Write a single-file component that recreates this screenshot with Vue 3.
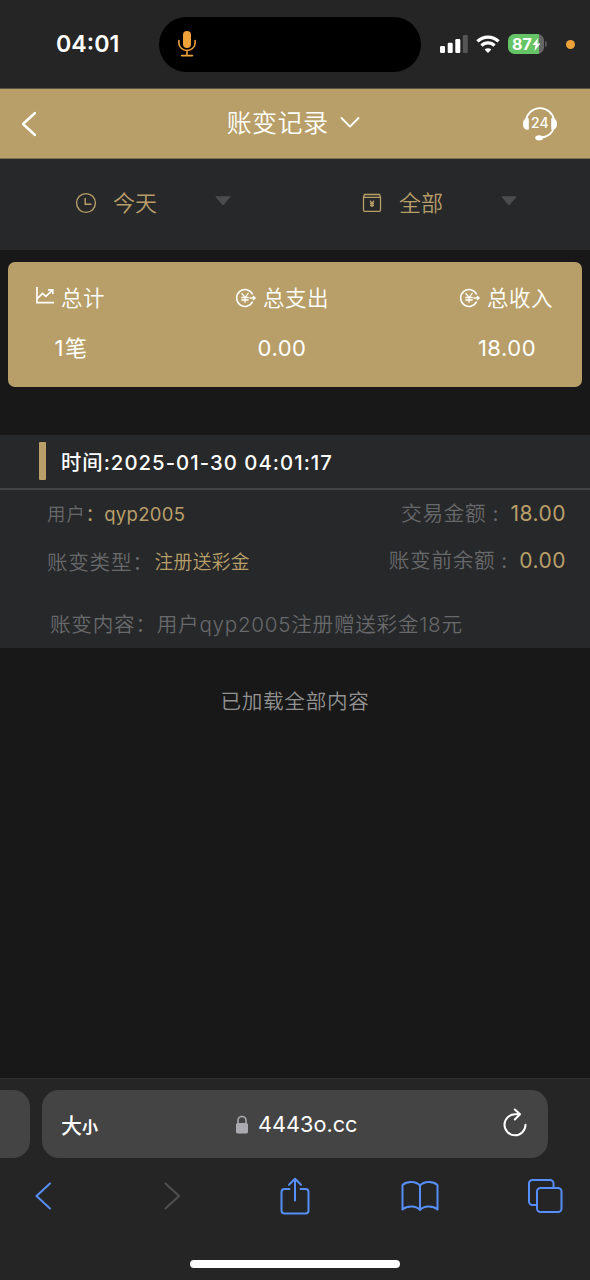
<script setup>
const totals = [
  { key: 'count', label: '总计', value: '1笔', icon: 'chart' },
  { key: 'out', label: '总支出', value: '0.00', icon: 'coin' },
  { key: 'in', label: '总收入', value: '18.00', icon: 'coin' },
]
const filters = [
  { key: 'day', label: '今天', icon: 'clock' },
  { key: 'type', label: '全部', icon: 'box' },
]
</script>

<template>
  <div class="screen">
    <div class="status">
      <span class="time">04:01</span>
      <div class="island">
        <svg width="20" height="28" viewBox="0 0 20 28" fill="none" stroke="#f0a23a" stroke-width="1.6" stroke-linecap="round">
          <rect x="6" y="1" width="8" height="17" rx="4" fill="#f0a23a" stroke="none" />
          <path d="M1.9 10.5v2.4a8.1 7.6 0 0 0 16.2 0v-2.4M10 20.8v4.6M4.6 25.6h10.8" />
        </svg>
      </div>
      <svg class="signal" width="28" height="18" viewBox="0 0 28 18" fill="#fff">
        <rect x="0" y="11" width="5" height="7" rx="1.2" />
        <rect x="7.7" y="7.7" width="5" height="10.3" rx="1.2" />
        <rect x="15.3" y="4" width="5" height="14" rx="1.2" />
        <rect x="22.8" y="0" width="5" height="18" rx="1.2" fill="#555" />
      </svg>
      <svg class="wifi" width="24" height="18" viewBox="0 0 24 18" fill="none" stroke="#fff" stroke-width="3.3">
        <path d="M1.4 6.4a15.2 15.2 0 0 1 21.2 0" />
        <path d="M5.5 10.6a9.3 9.3 0 0 1 13 0" />
        <path d="M12 17.9L8.6 14.5a4.9 4.9 0 0 1 6.8 0z" fill="#fff" stroke="none" />
      </svg>
      <div class="battery">
        <span>87</span>
        <svg width="9" height="13" viewBox="0 0 9 13"><path d="M6.2 0L.4 7.1h3.1L2.5 13l6-7.5H5.3z" fill="#fff" /></svg>
      </div>
      <i class="nub"></i>
      <i class="dot"></i>
    </div>

    <header class="nav">
      <svg class="back" width="16" height="26" viewBox="0 0 16 26" fill="none" stroke="#fff" stroke-width="2.4" stroke-linecap="round" stroke-linejoin="round"><path d="M14 2L2 13l12 11" /></svg>
      <div class="title">
        <span>账变记录</span>
        <svg width="20" height="13" viewBox="0 0 20 13" fill="none" stroke="#fff" stroke-width="1.9" stroke-linecap="round" stroke-linejoin="round"><path d="M1.5 2L10 10.6 18.5 2" /></svg>
      </div>
      <svg class="service" width="36" height="34" viewBox="0 0 36 34" fill="none">
        <path d="M4 13A14.2 14.2 0 0 1 32 13M32 20C30.5 26.5 26 30.2 18 30.7" stroke="#fff" stroke-width="1.8" />
        <path d="M6.8 11.5v11C3 23.5 1 20.8 1 17s2-6.5 5.800-5.500zM29.200 11.500v11c3.800 1 5.800-1.700 5.800-5.500s-2-6.500-5.800-5.500z" fill="#fff" />
        <ellipse cx="17.200" cy="30.800" rx="4" ry="2.600" fill="#fff" />
        <text x="17.800" y="21.300" text-anchor="middle" class="svc-text">24</text>
      </svg>
    </header>

    <div class="filters">
      <div v-for="f in filters" :key="f.key" class="filter" :class="f.key">
        <svg v-if="f.icon === 'clock'" width="22" height="22" viewBox="0 0 22 22" fill="none" stroke="#b89f69" stroke-width="1.400"><circle cx="11" cy="11" r="9.400" /><path d="M10.200 6v6.300h6.300" /></svg>
        <svg v-else width="22" height="22" viewBox="0 0 22 22" fill="none" stroke="#b89f69" stroke-width="1.300"><path d="M3.500 2.500h15l1 2.500v13.300a1 1 0 0 1-1 1h-15a1 1 0 0 1-1-1V5zM2.500 5.300h17" /><path d="M9 8.800l2 2.300 2-2.300M11 11v4M9 11.500h4M9 13.500h4" /></svg>
        <span>{{ f.label }}</span>
        <svg class="caret" width="16" height="10" viewBox="0 0 16 10"><path d="M.8.300h14.400q.600 0 .200.600L8.700 8.800q-.7.700-1.400 0L.6.900Q.2.300.8.300z" fill="#4b4c4e" /></svg>
      </div>
    </div>

    <main>
      <section class="totals">
        <div v-for="t in totals" :key="t.key" class="total" :class="t.key">
          <div class="total-label">
            <svg v-if="t.icon === 'chart'" width="20" height="20" viewBox="0 0 20 20" fill="none" stroke="#fff" stroke-width="1.700"><path d="M2 1v15.600h17M2 13l5.500-5.600 3.300 3 6.500-6M13 3.800h4.800v4.500" /></svg>
            <svg v-else width="22" height="20" viewBox="0 0 22 20" fill="none" stroke="#fff" stroke-width="1.500"><path d="M17.600 6.300A8.400 8.400 0 1 0 17.600 13.700" /><path d="M6.500 5.200l3.500 4.100 3.500-4.100M10 9.300v5.500M6.300 9.500h7.400M6.300 12h7.400M14.500 10h5.500M18 8l2.200 2-2.200 2" stroke-width="1.300" /></svg>
            <span>{{ t.label }}</span>
          </div>
          <div class="total-value">{{ t.value }}</div>
        </div>
      </section>

      <article class="record">
        <div class="record-head"><i></i><span>时间:2025-01-30 04:01:17</span></div>
        <div class="line user">
          <div><span class="small">用户</span><b>：qyp2005</b></div>
          <div class="amount"><span>交易金额</span><em>:</em><b>18.00</b></div>
        </div>
        <div class="line kind">
          <div><span>账变类型：</span><b>注册送彩金</b></div>
          <div class="amount"><span>账变前余额</span><em>:</em><b>0.00</b></div>
        </div>
        <p class="content">账变内容：用户qyp2005注册赠送彩金18元</p>
      </article>
      <p class="end">已加载全部内容</p>
    </main>

    <footer class="browser">
      <div class="tabs">
        <div class="prev-tab"></div>
        <div class="address">
          <span class="size">大<small>小</small></span>
          <div class="host">
            <svg width="14" height="19" viewBox="0 0 14 19"><path d="M3 9V5.500a4 4 0 0 1 8 0V9" fill="none" stroke="#aaaaaf" stroke-width="1.600" /><rect x="1" y="8" width="12" height="10.500" rx="1.800" fill="#aaaaaf" /></svg>
            <span>4443o.cc</span>
          </div>
          <svg class="reload" width="26" height="30" viewBox="0 0 26 30" fill="none" stroke="#fff" stroke-width="2" stroke-linecap="round" stroke-linejoin="round"><path d="M23.500 16.800A10.500 10.500 0 1 1 13 6.300h4.500M12.800 1.500l5.200 4.800-5.200 5.200" /></svg>
        </div>
      </div>
      <div class="tools">
        <svg width="18" height="30" viewBox="0 0 18 30" class="blue"><path d="M16 2.500L2.500 15 16 27.500" /></svg>
        <svg width="18" height="30" viewBox="0 0 18 30" class="gray forward"><path d="M2.500 2.500L16 15 2.500 27.500" /></svg>
        <svg width="30" height="38" viewBox="0 0 30 38" class="blue share"><path d="M9.500 12H4.500a3 3 0 0 0-3 3v18.500a3 3 0 0 0 3 3h21a3 3 0 0 0 3-3V15a3 3 0 0 0-3-3h-5M15 23.500V2M9 7.800L15 1.800l6 6" /></svg>
        <svg width="38" height="32" viewBox="0 0 38 32" class="blue book"><path d="M19 5.500C15 1 6 .7 1.500 5v24.500C6 25.500 15 25.500 19 30c4-4.500 13-4.500 17.500-.500V5C32 .700 23 1 19 5.500zM19 5.500V30" /></svg>
        <svg width="36" height="36" viewBox="0 0 36 36" class="blue windows"><rect x="10" y="10" width="24.500" height="24" rx="3.500" /><path d="M10 27H5.500a3.500 3.500 0 0 1-3.500-3.500V5.500A3.500 3.500 0 0 1 5.500 2H23a3.500 3.500 0 0 1 3.500 3.500V10" /></svg>
      </div>
      <div class="home"></div>
    </footer>
  </div>
</template>

<style>
body { margin: 0; background: #181818; }
</style>

<style scoped>
* { box-sizing: border-box; }
.screen { width: 590px; height: 1280px; background: #181818; display: flex; flex-direction: column; overflow: hidden; color: #fff; font-family: Inter, "Noto Sans CJK SC", sans-serif; }
svg { display: block; flex: none; }
p { margin: 0; }
b, em { font-weight: 400; font-style: normal; }
span, b, em { white-space: nowrap; }

.status { height: 89px; background: #252525; border-bottom: 1px solid #5b5344; display: flex; align-items: center; flex: none; }
.time { width: 103px; margin-left: 56px; font-size: 23.200px; font-weight: 600; line-height: 30px; }
.island { width: 262px; height: 55px; border-radius: 28px; background: #000; display: flex; align-items: center; padding-left: 18px; }
.signal { margin-left: 19px; }
.wifi { margin-left: 8px; }
.battery { width: 36px; height: 20px; margin-left: 8px; border-radius: 6.500px; background: linear-gradient(90deg, #65c466 87%, #666 87%); display: flex; align-items: center; padding-left: 4px; font-size: 16px; font-weight: 700; line-height: 20px; }
.nub { width: 2px; height: 6px; margin-left: 1px; border-radius: 0 2px 2px 0; background: #555; }
.dot { width: 9px; height: 9px; border-radius: 50%; background: #f0a23a; margin-left: 19px; }

.nav { height: 70px; background: #b89f69; border-bottom: 1px solid #7f7151; display: flex; flex: none; align-items: center; justify-content: space-between; padding: 0 32px 0 21px; }
.title { display: flex; align-items: center; gap: 12px; margin: 0 0 2px 28px; font-size: 25px; font-weight: 350; letter-spacing: .4px; line-height: 34px; }
.svc-text { font: 500 14px Inter, sans-serif; fill: #fff; }

.filters { height: 91px; flex: none; background: #272829; display: flex; }
.filter { width: 286px; flex: none; display: flex; align-items: center; padding: 0 0 3px 75px; color: #b89f69; font-size: 22px; font-weight: 350; }
.filter span { margin-left: 16px; width: 102px; margin-bottom: 4px; }
.caret { margin-bottom: 4px; }

main { flex: 1; }
.totals { height: 125px; margin: 12px 8px 0; border-radius: 7px; background: #b89f69; display: flex; justify-content: space-between; padding: 20px 29px 0 27px; }
.total-label { display: flex; align-items: center; gap: 6px; height: 32px; font-size: 21.500px; font-weight: 350; letter-spacing: .5px; }
.total-label span { margin-bottom: 3px; }
.total-label svg { margin-bottom: 1px; }
.total.count svg { margin-bottom: 4px; }
.total-value { margin-top: 18px; height: 32px; line-height: 32px; font-size: 22px; text-align: center; font-weight: 370; letter-spacing: .5px; }
.total.in .total-value { padding-left: 2px; }
.total.count .total-value { padding-left: 3px; letter-spacing: 1.500px; }

.record { margin-top: 48px; height: 213px; background: #272829; color: #68696b; font-size: 20.600px; letter-spacing: .7px; font-weight: 350; }
.record-head { height: 55px; border-bottom: 2px solid #434445; display: flex; align-items: center; padding-left: 39px; color: #fff; font-size: 20.300px; font-weight: 500; letter-spacing: 1.050px; }
.record-head i { width: 7px; height: 38px; background: #b89f69; margin: 0 15px 1px 0; border-radius: 1px; }
.record-head span { margin-bottom: 2px; }
.line { display: flex; justify-content: space-between; padding: 0 24px 0 47px; line-height: 30px; height: 30px; }
.line > div { display: flex; }
.line b { color: #b89f69; }
.user { margin-top: 9px; }
.user .small { font-size: 18.500px; }
.user > div:first-child b { font-size: 18.500px; letter-spacing: .300px; }
.kind { margin-top: 17px; }
.kind > div:first-child { padding-top: 2px; }
.kind > div:first-child b { font-size: 18.800px; letter-spacing: .3px; font-weight: 350; margin-left: 1px; }
.amount em { width: 12px; margin: 0 6px; }
.amount b { font-size: 21px; letter-spacing: .500px; }
.content { margin-top: 34px; padding-left: 50px; line-height: 30px; letter-spacing: .750px; }
.end { margin-top: 39px; text-align: center; line-height: 30px; font-size: 20.600px; letter-spacing: .7px; font-weight: 350; color: #929292; }

.browser { height: 202px; flex: none; background: #252525; border-top: 1px solid #303030; padding-top: 11px; }
.tabs { display: flex; gap: 12px; }
.prev-tab { width: 30px; height: 68px; background: #444; border-radius: 0 17px 17px 0; }
.address { width: 506px; height: 68px; background: #444; border-radius: 17px; display: flex; align-items: center; padding: 0 20px 0 19px; }
.size { width: 62px; font-size: 21px; font-weight: 500; }
.size small { font-size: 16px; font-weight: 700; }
.host { display: flex; align-items: center; gap: 9px; font-size: 21.700px; margin-left: 112px; }
.reload { margin: 0 0 3px auto; }
.tools { height: 40px; margin-top: 18px; padding-left: 34px; display: flex; align-items: center; }
.tools svg { fill: none; stroke-width: 2; stroke-linecap: round; stroke-linejoin: round; }
.forward { margin-left: 111px; }
.share { margin-left: 99px; }
.book { margin-left: 91px; }
.windows { margin-left: 88px; }
.tools .blue { stroke: #568ff7; }
.tools .gray { stroke: #505050; }
.home { width: 210px; height: 8px; border-radius: 4px; background: #fff; margin: 44px auto 0; }
</style>
